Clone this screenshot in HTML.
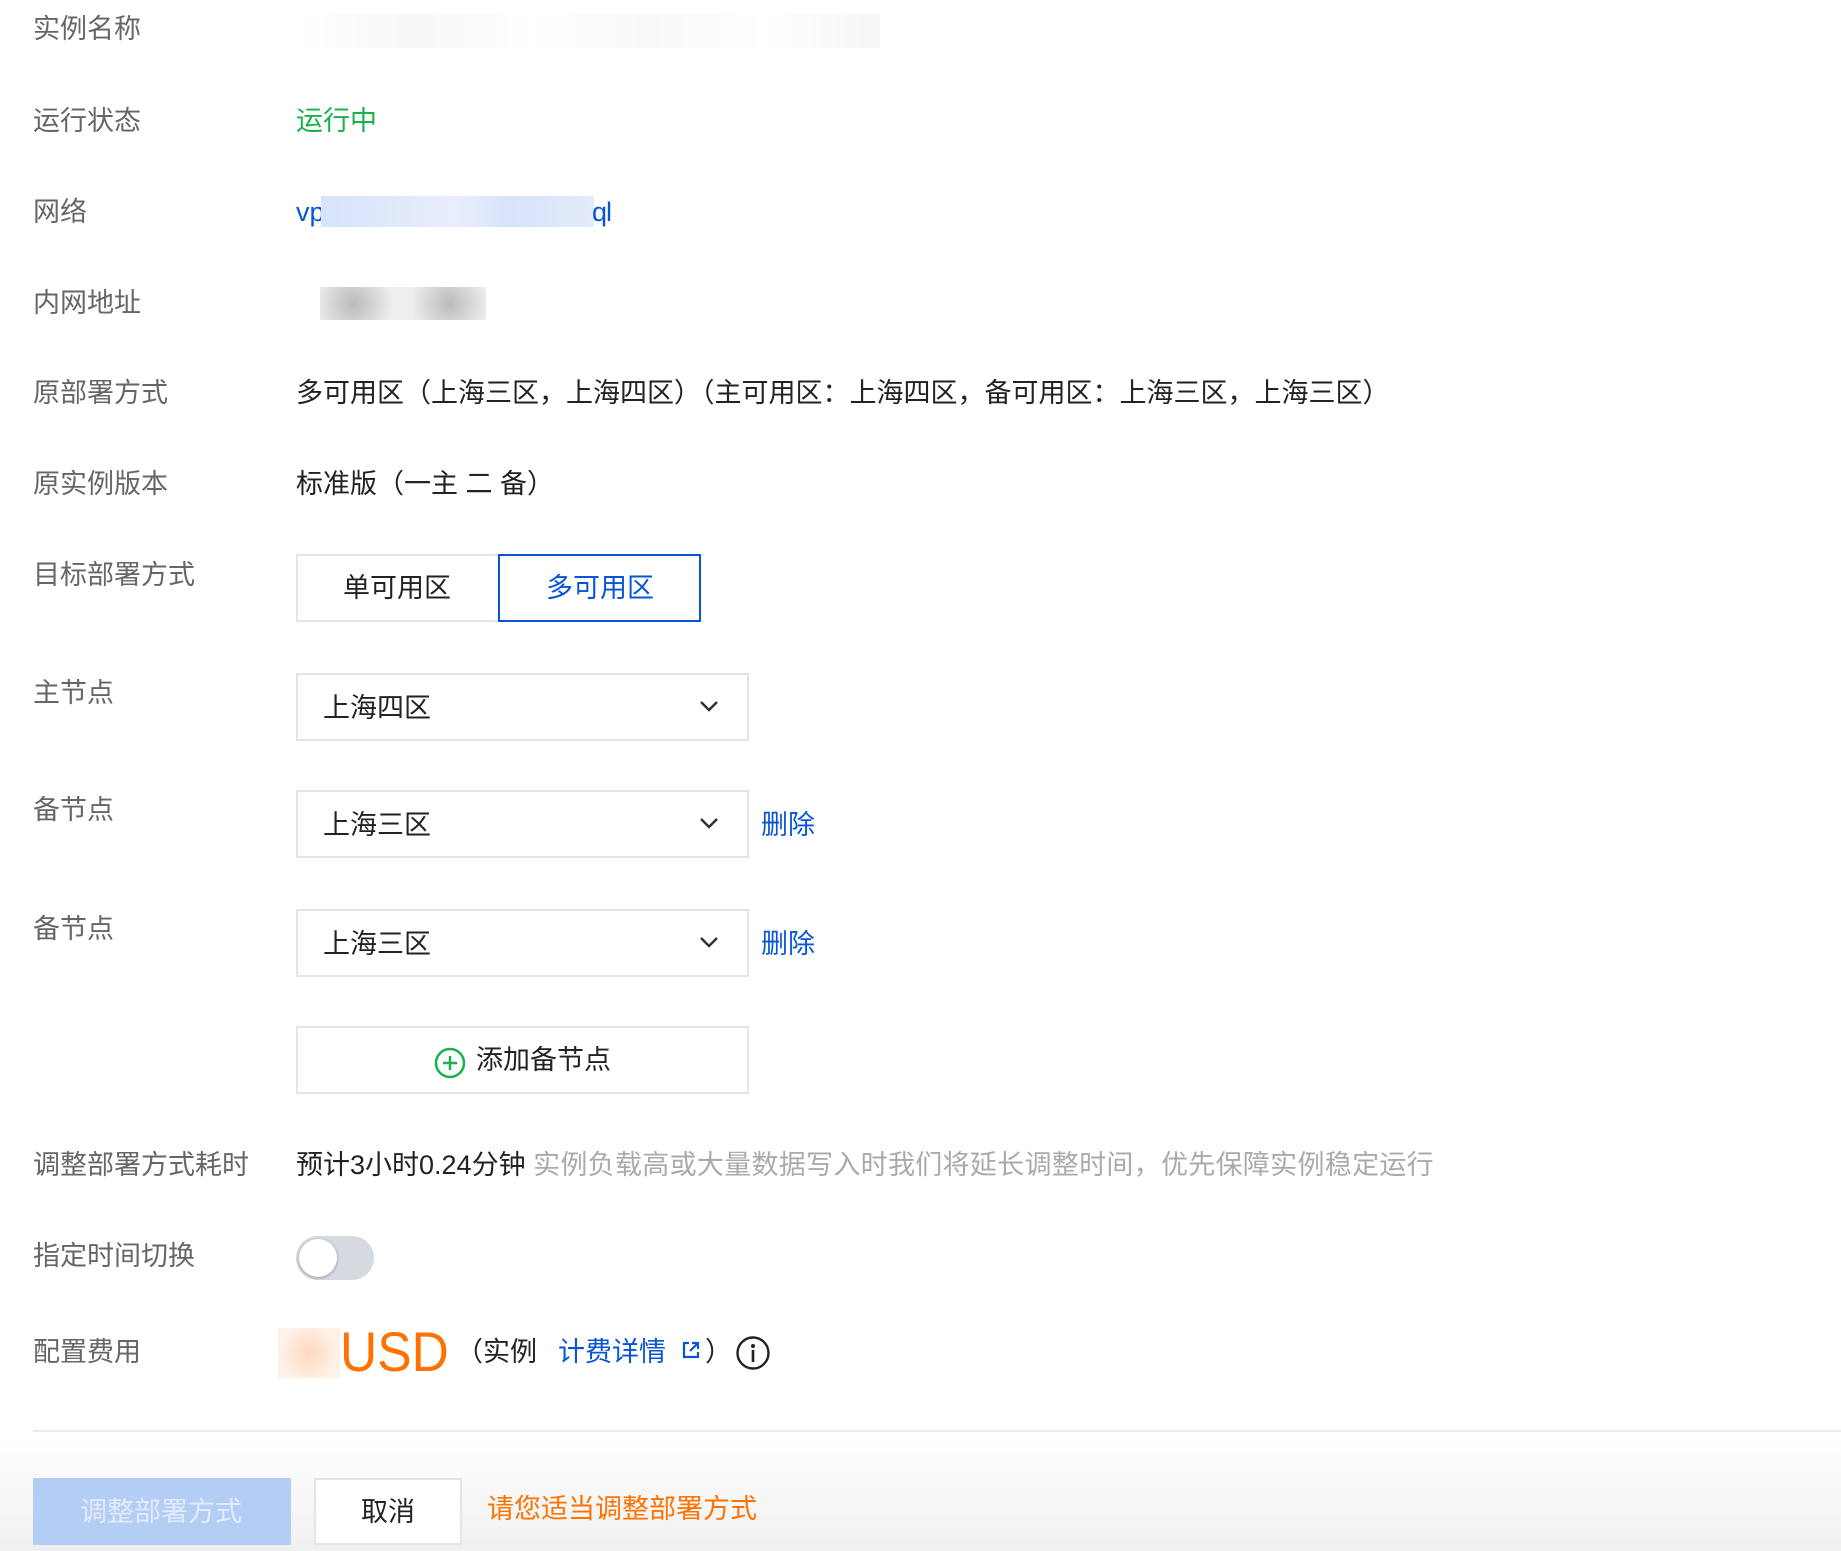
<!DOCTYPE html>
<html><head><meta charset="utf-8"><style>
*{margin:0;padding:0;box-sizing:border-box}
body{width:1841px;height:1551px;background:#fff;position:relative;overflow:hidden;font-family:"Liberation Sans","Noto Sans CJK SC",sans-serif;font-size:27px;color:#222}
.a{position:absolute;white-space:nowrap;line-height:36px}
.l{left:33px;color:#666}
.v{left:296px}
.box{position:absolute;border:2px solid #e3e4e8;background:#fff}
.sel{left:296px;width:453px;height:68px}
.sel span{position:absolute;left:25px;top:15px;line-height:36px;color:#222}
.sel svg{position:absolute;right:28px;top:24px}
.del{left:761px;color:#0a55d6}
</style></head><body>
<div class="a l" style="top:11px">实例名称</div>
<div style="position:absolute;left:300px;top:14px;width:580px;height:34px;background:linear-gradient(90deg,#fff,#f4f4f4 20%,#fff 40%,#f6f6f6 60%,#fff 80%,#f2f2f2);opacity:.7"></div>
<div class="a l" style="top:103px">运行状态</div>
<div class="a v" style="top:103px;color:#18b24b">运行中</div>
<div class="a l" style="top:194px">网络</div>
<div class="a v" style="top:194px;color:#0a55d6">vp</div>
<div style="position:absolute;left:321px;top:196px;width:273px;height:31px;background:linear-gradient(90deg,#d6e3fa,#e9eefa 50%,#d6e3fa 70%,#e4ebfa)"></div>
<div class="a" style="left:592px;top:194px;color:#0a55d6;letter-spacing:-1px">ql</div>
<div class="a l" style="top:285px">内网地址</div>
<div style="position:absolute;left:320px;top:287px;width:166px;height:33px;background:radial-gradient(circle at 20% 50%,#bbb,#eee 30%,transparent 50%),radial-gradient(circle at 78% 50%,#bbb,#eee 30%,transparent 50%),#f2f2f2"></div>
<div class="a l" style="top:375px">原部署方式</div>
<div class="a v" style="top:375px">多可用区（上海三区，上海四区）（主可用区：上海四区，备可用区：上海三区，上海三区）</div>
<div class="a l" style="top:466px">原实例版本</div>
<div class="a v" style="top:466px">标准版（一主 二 备）</div>
<div class="a l" style="top:557px">目标部署方式</div>
<div class="box" style="left:296px;top:554px;width:204px;height:68px"></div>
<div class="a" style="left:343px;top:570px">单可用区</div>
<div class="box" style="left:498px;top:554px;width:203px;height:68px;border-color:#0a55d6"></div>
<div class="a" style="left:546px;top:570px;color:#0a55d6">多可用区</div>
<div class="a l" style="top:675px">主节点</div>
<div class="box sel" style="top:673px"><span>上海四区</span><svg width="20" height="14"><path d="M2 3l8 8 8-8" stroke="#333" stroke-width="2.5" fill="none"/></svg></div>
<div class="a l" style="top:792px">备节点</div>
<div class="box sel" style="top:790px"><span>上海三区</span><svg width="20" height="14"><path d="M2 3l8 8 8-8" stroke="#333" stroke-width="2.5" fill="none"/></svg></div>
<div class="a del" style="top:807px">删除</div>
<div class="a l" style="top:911px">备节点</div>
<div class="box sel" style="top:909px"><span>上海三区</span><svg width="20" height="14"><path d="M2 3l8 8 8-8" stroke="#333" stroke-width="2.5" fill="none"/></svg></div>
<div class="a del" style="top:926px">删除</div>
<div class="box" style="left:296px;top:1026px;width:453px;height:68px"></div>
<svg style="position:absolute;left:434px;top:1047px" width="32" height="32"><circle cx="16" cy="16" r="14" stroke="#18b24b" stroke-width="2.5" fill="none"/><path d="M16 9v14M9 16h14" stroke="#18b24b" stroke-width="2.5"/></svg>
<div class="a" style="left:476px;top:1042px">添加备节点</div>
<div class="a l" style="top:1147px">调整部署方式耗时</div>
<div class="a v" style="top:1147px">预计3小时0.24分钟 <span style="color:#aaa;letter-spacing:0.3px">实例负载高或大量数据写入时我们将延长调整时间，优先保障实例稳定运行</span></div>
<div class="a l" style="top:1238px">指定时间切换</div>
<div style="position:absolute;left:296px;top:1236px;width:78px;height:44px;border-radius:22px;background:#d6d9e0"></div>
<div style="position:absolute;left:299px;top:1239px;width:38px;height:38px;border-radius:50%;background:#fff;box-shadow:0 1px 3px rgba(0,0,0,.3)"></div>
<div class="a l" style="top:1334px">配置费用</div>
<div style="position:absolute;left:278px;top:1328px;width:62px;height:50px;background:radial-gradient(circle,#fdd8bd,#fff1e6 70%)"></div>
<div class="a" style="left:340px;top:1318px;font-size:56px;line-height:68px;color:#ff7200;transform:scaleX(0.92);transform-origin:left">USD</div>
<div class="a" style="left:456px;top:1334px">（实例</div>
<div class="a" style="left:558px;top:1334px;color:#0a55d6">计费详情</div>
<svg style="position:absolute;left:681px;top:1340px" width="20" height="20"><path d="M8 3H3v14h14v-5M11 3h6v6M17 3l-8 8" stroke="#0a55d6" stroke-width="2.2" fill="none"/></svg>
<div class="a" style="left:705px;top:1334px">）</div>
<svg style="position:absolute;left:735px;top:1335px" width="36" height="36"><circle cx="18" cy="18" r="15.5" stroke="#222" stroke-width="2.4" fill="none"/><circle cx="18" cy="11" r="2" fill="#222"/><path d="M18 15v12" stroke="#222" stroke-width="2.6"/></svg>
<div style="position:absolute;left:33px;top:1430px;width:1808px;height:2px;background:#e8e9ee"></div>
<div style="position:absolute;left:0;top:1440px;width:1841px;height:111px;background:linear-gradient(#fff,#f0f0f0)"></div>
<div style="position:absolute;left:33px;top:1478px;width:258px;height:67px;background:#b3cdf4"></div>
<div class="a" style="left:80px;top:1494px;color:#e2ebfb">调整部署方式</div>
<div class="box" style="left:314px;top:1478px;width:148px;height:67px;background:#fff"></div>
<div class="a" style="left:361px;top:1494px">取消</div>
<div class="a" style="left:487px;top:1491px;color:#ff7200">请您适当调整部署方式</div>
</body></html>
